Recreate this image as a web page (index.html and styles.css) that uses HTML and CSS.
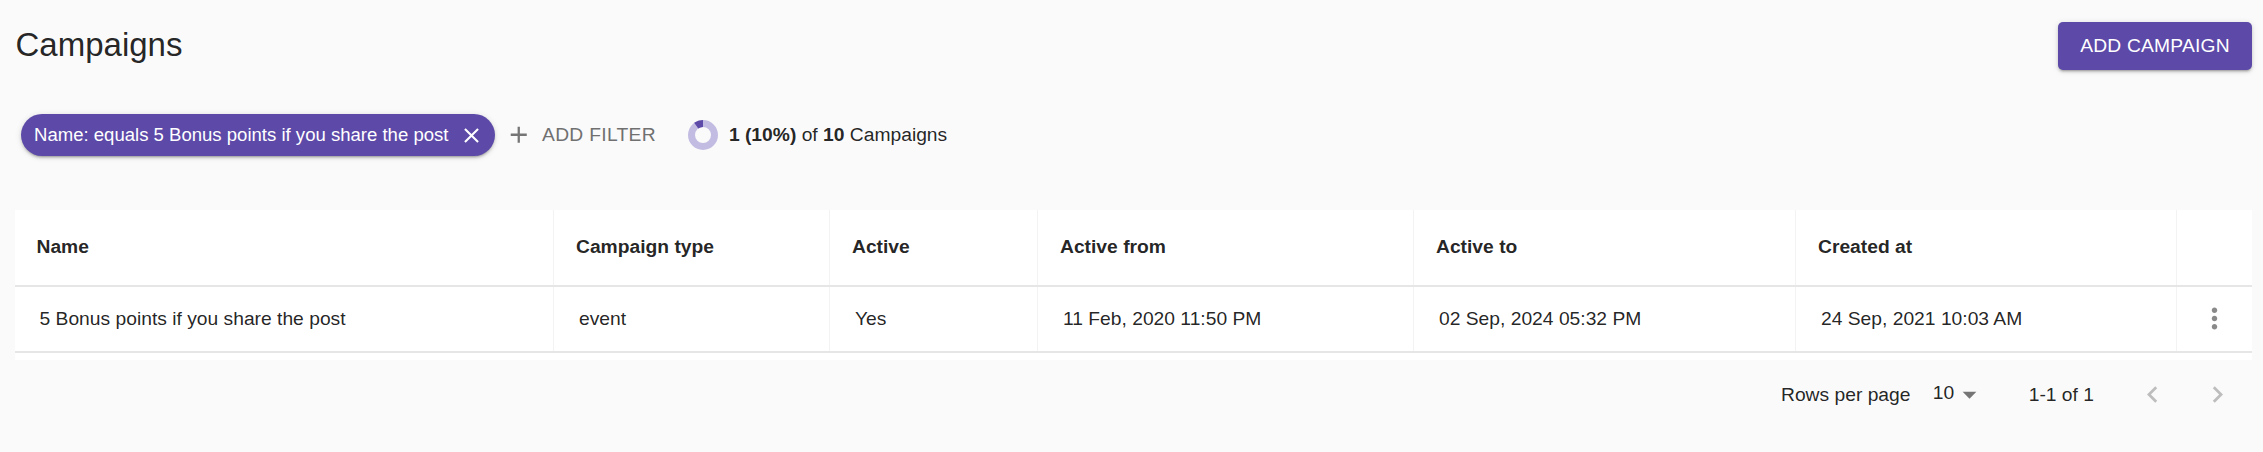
FILE: index.html
```html
<!DOCTYPE html>
<html lang="en">
<head>
<meta charset="utf-8">
<title>Campaigns</title>
<link rel="stylesheet" href="styles.css">
</head>
<body>
<main class="page">
  <header class="top">
    <h1 class="title">Campaigns</h1>
    <button class="primary" type="button">ADD CAMPAIGN</button>
  </header>
  <section class="filters">
    <div class="chip">
      <span class="chip-label">Name: equals 5 Bonus points if you share the post</span>
      <svg class="chip-x" viewBox="0 0 24 24"><path d="M19 6.41L17.59 5 12 10.59 6.41 5 5 6.41 10.59 12 5 17.59 6.41 19 12 13.41 17.59 19 19 17.59 13.41 12z"/></svg>
    </div>
    <button class="add-filter" type="button">
      <svg class="plus" viewBox="0 0 24 24"><path d="M19 13h-6v6h-2v-6H5v-2h6V5h2v6h6v2z"/></svg>
      <span>ADD FILTER</span>
    </button>
    <div class="stat">
      <svg class="donut" viewBox="0 0 30 30">
        <circle class="donut-bg" cx="15" cy="15" r="11.5"/>
        <circle class="donut-fg" cx="15" cy="15" r="11.5" pathLength="100" stroke-dasharray="10 90" transform="rotate(-126 15 15)"/>
      </svg>
      <span><b>1 (10%)</b> of <b>10</b> Campaigns</span>
    </div>
  </section>
  <section class="table">
    <div class="row head">
      <div class="cell">Name</div>
      <div class="cell">Campaign type</div>
      <div class="cell">Active</div>
      <div class="cell">Active from</div>
      <div class="cell">Active to</div>
      <div class="cell">Created at</div>
      <div class="cell"></div>
    </div>
    <div class="row body">
      <div class="cell">5 Bonus points if you share the post</div>
      <div class="cell">event</div>
      <div class="cell">Yes</div>
      <div class="cell">11 Feb, 2020 11:50 PM</div>
      <div class="cell">02 Sep, 2024 05:32 PM</div>
      <div class="cell">24 Sep, 2021 10:03 AM</div>
      <div class="cell actions">
        <svg class="dots" viewBox="0 0 24 24"><path d="M12 8c1.1 0 2-.9 2-2s-.9-2-2-2-2 .9-2 2 .9 2 2 2zm0 2c-1.1 0-2 .9-2 2s.9 2 2 2 2-.9 2-2-.9-2-2-2zm0 6c-1.1 0-2 .9-2 2s.9 2 2 2 2-.9 2-2-.9-2-2-2z"/></svg>
      </div>
    </div>
  </section>
  <footer class="pager">
    <span class="rows-label">Rows per page</span>
    <span class="rows-select">10<svg class="caret" viewBox="0 0 24 24"><path d="M7 10l5 5 5-5z"/></svg></span>
    <span class="range">1-1 of 1</span>
    <svg class="chev" viewBox="0 0 24 24"><path d="M15.41 7.41L14 6l-6 6 6 6 1.41-1.41L10.83 12z"/></svg>
    <svg class="chev next" viewBox="0 0 24 24"><path d="M10 6L8.59 7.41 13.17 12l-4.58 4.58L10 18l6-6z"/></svg>
  </footer>
</main>
</body>
</html>
```

FILE: styles.css
```css
* { box-sizing: border-box; }
html, body { margin: 0; padding: 0; height: 100%; }
body {
  background: #fafafa;
  color: rgba(0, 0, 0, .87);
  font-family: "Liberation Sans", Arial, sans-serif;
  font-size: 19.25px;
  overflow: hidden;
}
.page { padding: 0 11px 0 14.5px; }
.top {
  height: 90px;
  display: flex;
  align-items: center;
  justify-content: space-between;
}
.title {
  margin: 0;
  padding-left: 1px;
  font-size: 33px;
  font-weight: 400;
  line-height: 1.2;
}
.primary {
  width: 194px;
  height: 48px;
  margin-top: 2px;
  border: 0;
  border-radius: 5px;
  background: #5c49a8;
  color: #fff;
  font: 400 19.25px "Liberation Sans", Arial, sans-serif;
  letter-spacing: .2px;
  box-shadow: 0 3px 2px -2px rgba(0,0,0,.2), 0 2px 3px 0 rgba(0,0,0,.14), 0 1px 6px 0 rgba(0,0,0,.12);
}
.filters {
  height: 90px;
  display: flex;
  align-items: center;
  padding-left: 6px;
}
.chip {
  width: 474px;
  height: 42px;
  border-radius: 21px;
  background: #5c49a8;
  color: #fff;
  display: flex;
  align-items: center;
  padding-left: 13.5px;
  font-size: 18.56px;
  box-shadow: 0 3px 2px -2px rgba(0,0,0,.2), 0 2px 3px 0 rgba(0,0,0,.14), 0 1px 6px 0 rgba(0,0,0,.12);
}
.chip-label { white-space: nowrap; flex: none; }
.chip-x {
  width: 25px;
  height: 25px;
  flex: none;
  margin-left: 10.5px;
  fill: #fff;
}
.add-filter {
  display: flex;
  align-items: center;
  border: 0;
  background: none;
  padding: 0;
  margin-left: 10px;
  color: #707070;
  font: 400 19.25px "Liberation Sans", Arial, sans-serif;
  letter-spacing: .3px;
}
.plus {
  width: 27.5px;
  height: 27.5px;
  flex: none;
  margin-right: 10px;
  fill: #757575;
}
.stat {
  display: flex;
  align-items: center;
  margin-left: 32px;
  gap: 11px;
}
.stat b { font-weight: 700; }
.donut { width: 30px; height: 30px; flex: none; }
.donut-bg, .donut-fg { fill: none; stroke-width: 7; }
.donut-bg { stroke: #c3bce2; }
.donut-fg { stroke: #5c49a8; }
.table {
  background: #fff;
  margin-top: 29.5px;
  padding-bottom: 7px;
}
.row {
  display: grid;
  grid-template-columns: 538.5px 276px 208px 376px 382px 381px 76px;
  border-bottom: 2px solid #e6e6e6;
}
.head { height: 77px; font-weight: 700; }
.body { height: 66px; }
.cell {
  display: flex;
  align-items: center;
  border-left: 1px solid #f3f3f3;
  white-space: nowrap;
}
.cell:first-child { border-left: 0; }
.head .cell { padding-left: 22px; }
.body .cell { padding-left: 25px; }
.body .actions { padding-left: 21px; }
.dots { width: 33px; height: 33px; flex: none; fill: #8a8a8a; }
.pager {
  height: 70px;
  display: flex;
  align-items: center;
  padding-left: 1766.5px;
}
.rows-label { width: 151.7px; flex: none; }
.rows-select { display: flex; align-items: center; width: 96px; flex: none; margin-top: -4px; }
.caret { width: 33px; height: 33px; flex: none; margin-left: -1.5px; fill: #757575; margin-top: 4px; }
.range { width: 107px; flex: none; }
.chev { width: 33px; height: 33px; flex: none; fill: #bdbdbd; margin-top: -1px; }
.next { margin-left: 32px; }
```
